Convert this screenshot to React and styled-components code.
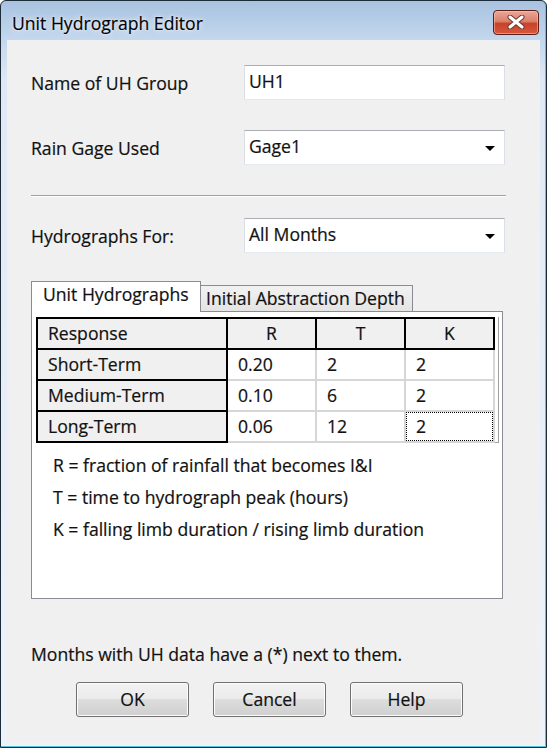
import styled, { createGlobalStyle } from "styled-components"

const GlobalStyle = createGlobalStyle`
  html, body {
    margin: 0;
    padding: 0;
    background: #ffffff;
  }
  body {
    font-family: "Open Sans", "Noto Sans", sans-serif;
    color: #111;
    -webkit-text-stroke: 0.2px #111;
  }
`

const Window = styled.div`
  width: 547px;
  height: 748px;
  box-sizing: border-box;
  display: flex;
  flex-direction: column;
  border: 1px solid #1d2a38;
  border-radius: 6px 6px 0 0;
  background: linear-gradient(#a8c2df, #c3d7ed 38px, #dfe9f5 80px, #eef3fa);
  box-shadow: inset 0 -1px 0 #57c3d8, inset -1px 0 0 #57c3d8;
  overflow: hidden;
`

const TitleBar = styled.div`
  height: 39px;
  flex-shrink: 0;
  display: flex;
  align-items: center;
  justify-content: space-between;
  padding: 0 7px 0 11px;
`

const Title = styled.span`
  font-size: 17.6px;
  color: #000;
  text-shadow: 0 0 6px rgba(255, 255, 255, 0.9), 0 0 2px rgba(255, 255, 255, 0.9);
  margin-top: 4px;
`

const CloseButton = styled.div`
  width: 46px;
  height: 25px;
  margin-top: 3px;
  box-sizing: border-box;
  border: 1px solid #5b1f15;
  border-radius: 4px;
  background: linear-gradient(#e9a89a, #dc806a 45%, #c84228 55%, #d65a3e);
  box-shadow: inset 0 0 0 1px rgba(255, 200, 190, 0.5);
  display: flex;
  align-items: center;
  justify-content: center;
`

const Client = styled.div`
  flex: 1;
  margin: 0 6px 4px 6px;
  background: #f0f0f0;
  padding: 25px 34px 0 24px;
  display: flex;
  flex-direction: column;
`

const FormRow = styled.div`
  display: grid;
  grid-template-columns: 213px 261px;
  align-items: center;
  height: 35px;
  margin-top: ${p => p.$gap || 0}px;
`

const Label = styled.span`
  font-size: 17.6px;
`

const Field = styled.div`
  height: 35px;
  box-sizing: border-box;
  background: #fff;
  border: 1px solid #e3e9ef;
  border-top-color: #abadb3;
  border-left-color: #dbdfe6;
  border-right-color: #dbdfe6;
  display: flex;
  align-items: center;
  justify-content: space-between;
  padding: 0 9px 3px 4px;
  font-size: 17.6px;
`

const Caret = styled.span`
  width: 0;
  height: 0;
  border-left: 5px solid transparent;
  border-right: 5px solid transparent;
  border-top: 5px solid #000;
  margin-top: 5px;
`

const Separator = styled.div`
  margin-top: 30px;
  height: 0;
  border-top: 1px solid #a0a0a0;
  border-bottom: 1px solid #ffffff;
`

const TabStrip = styled.div`
  display: flex;
  align-items: flex-end;
  margin-top: 28px;
  position: relative;
  z-index: 1;
  margin-bottom: -1px;
`

const Tab = styled.div`
  box-sizing: border-box;
  width: ${p => p.$w}px;
  height: ${p => (p.$active ? 31 : 27)}px;
  border: 1px solid #898c95;
  border-bottom: ${p => (p.$active ? "none" : "1px solid #898c95")};
  border-left: ${p => (p.$active ? "1px solid #898c95" : "none")};
  background: ${p => (p.$active ? "#ffffff" : "linear-gradient(#f2f2f2, #e4e4e4)")};
  font-size: 17.6px;
  padding: ${p => (p.$active ? "0 0 0 11px" : "0 0 0 5px")};
  white-space: nowrap;
  line-height: 24px;
`

const Panel = styled.div`
  width: 472px;
  height: 288px;
  box-sizing: border-box;
  border: 1px solid #898c95;
  background: #fff;
  padding: 5px 0 0 4px;
`

const GridBox = styled.div`
  width: 463px;
  height: 126px;
  box-sizing: border-box;
  border-right: 1px solid #a0a0a0;
  border-bottom: 1px solid #a0a0a0;
  background: #fff;
`

const Table = styled.table`
  border-collapse: collapse;
  table-layout: fixed;
  font-size: 17.6px;
`

const Row = styled.tr`
  height: 31px;
`

const Cell = styled.td`
  padding: 0 0 2px 10px;
  border: 2px solid ${p => (p.$fixed ? "#000" : "#d6d6d6")};
  background: ${p => (p.$fixed ? "#f0f0f0" : "#fff")};
  text-align: ${p => (p.$center ? "center" : "left")};
  white-space: nowrap;
  padding-left: ${p => (p.$center ? 0 : 10)}px;
  outline: ${p => (p.$focus ? "1px dotted #000" : "none")};
  outline-offset: -2px;
`

const Legend = styled.div`
  margin-top: 6px;
  padding-left: 17px;
  font-size: 17.6px;
  line-height: 32px;
`

const Note = styled.div`
  margin-top: 43px;
  font-size: 17.6px;
  line-height: 24px;
`

const ButtonRow = styled.div`
  display: flex;
  gap: 24px;
  margin-top: 16px;
  padding-left: 45px;
`

const Button = styled.div`
  width: 113px;
  height: 35px;
  box-sizing: border-box;
  border: 1px solid #707070;
  border-radius: 3px;
  background: linear-gradient(#f2f2f2, #ebebeb 50%, #dddddd 50%, #cfcfcf);
  box-shadow: inset 0 0 0 1px #fcfcfc;
  display: flex;
  align-items: center;
  justify-content: center;
  font-size: 17.6px;
  padding-bottom: 2px;
`

const rows = [
  ["Short-Term", "0.20", "2", "2"],
  ["Medium-Term", "0.10", "6", "2"],
  ["Long-Term", "0.06", "12", "2"],
]

export default function App() {
  return (
    <>
      <GlobalStyle />
      <Window>
        <TitleBar>
          <Title>Unit Hydrograph Editor</Title>
          <CloseButton>
            <svg width="18" height="14" viewBox="0 0 18 14">
              <path d="M3 2 L15 12 M15 2 L3 12" stroke="#6b3a33" strokeWidth="5" strokeLinecap="round" />
              <path d="M3 2 L15 12 M15 2 L3 12" stroke="#ffffff" strokeWidth="3" strokeLinecap="round" />
            </svg>
          </CloseButton>
        </TitleBar>
        <Client>
          <FormRow>
            <Label>Name of UH Group</Label>
            <Field>UH1</Field>
          </FormRow>
          <FormRow $gap={30}>
            <Label>Rain Gage Used</Label>
            <Field>
              Gage1
              <Caret />
            </Field>
          </FormRow>
          <Separator />
          <FormRow $gap={21}>
            <Label>Hydrographs For:</Label>
            <Field>
              All Months
              <Caret />
            </Field>
          </FormRow>
          <TabStrip>
            <Tab $active $w={170}>Unit Hydrographs</Tab>
            <Tab $w={212}>Initial Abstraction Depth</Tab>
          </TabStrip>
          <Panel>
            <GridBox>
              <Table>
                <colgroup>
                  <col style={{ width: 190 }} />
                  <col style={{ width: 89 }} />
                  <col style={{ width: 89 }} />
                  <col style={{ width: 89 }} />
                </colgroup>
                <tbody>
                  <Row>
                    <Cell $fixed>Response</Cell>
                    <Cell $fixed $center>R</Cell>
                    <Cell $fixed $center>T</Cell>
                    <Cell $fixed $center>K</Cell>
                  </Row>
                  {rows.map((r, i) => (
                    <Row key={r[0]}>
                      <Cell $fixed>{r[0]}</Cell>
                      <Cell>{r[1]}</Cell>
                      <Cell>{r[2]}</Cell>
                      <Cell $focus={i === 2}>{r[3]}</Cell>
                    </Row>
                  ))}
                </tbody>
              </Table>
            </GridBox>
            <Legend>
              <div>R = fraction of rainfall that becomes I&amp;I</div>
              <div>T = time to hydrograph peak (hours)</div>
              <div>K = falling limb duration / rising limb duration</div>
            </Legend>
          </Panel>
          <Note>Months with UH data have a (*) next to them.</Note>
          <ButtonRow>
            <Button>OK</Button>
            <Button>Cancel</Button>
            <Button>Help</Button>
          </ButtonRow>
        </Client>
      </Window>
    </>
  )
}
